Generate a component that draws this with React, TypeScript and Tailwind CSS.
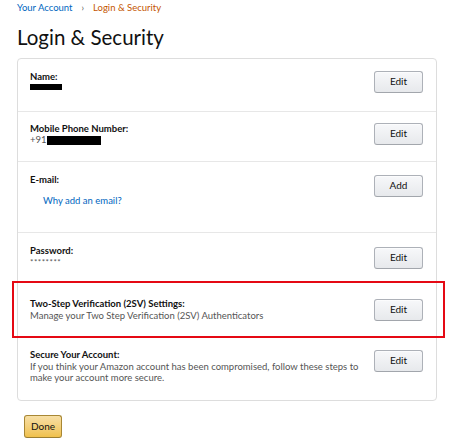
import type { ReactNode } from 'react'

const FONT = "font-['Lato','Open_Sans',sans-serif]"

function EditButton({ label = 'Edit' }: { label?: string }) {
  return (
    <button className="w-[49px] h-[22px] rounded-[3px] border border-[#adb1b8] border-b-[#a2a6ac] bg-gradient-to-b from-[#f7f8fa] to-[#e7e9ec] text-[10px] text-[#111] shadow-[0_1px_0_rgba(255,255,255,0.6)_inset]">
      {label}
    </button>
  )
}

function Row({
  height,
  padTop,
  btnTop,
  label,
  button = 'Edit',
  last,
  children,
}: {
  height: number
  padTop: number
  btnTop: number
  label: string
  button?: string
  last?: boolean
  children?: ReactNode
}) {
  return (
    <div
      className={`relative flex justify-between pl-[12px] pr-[13px] ${last ? '' : 'border-b border-[#e7e7e7]'}`}
      style={{ height }}
    >
      <div className="flex flex-col" style={{ paddingTop: padTop }}>
        <span className="text-[9.5px] leading-[12px] font-bold text-[#111]">{label}</span>
        {children}
      </div>
      <div style={{ paddingTop: btnTop }}>
        <EditButton label={button} />
      </div>
    </div>
  )
}

export default function App() {
  return (
    <div className={`${FONT} w-[474px] h-[441px] bg-white pl-[17px] pt-[1px]`}>
      {/* breadcrumb */}
      <div className="flex items-center text-[9.5px] leading-[14px]">
        <span className="text-[#0066c0]">Your Account</span>
        <span className="mx-[9px] text-[#555] text-[9px]">›</span>
        <span className="text-[#c45500]">Login &amp; Security</span>
      </div>

      <h1 className="mt-[9px] text-[20.5px] leading-[26px] text-[#111]">Login &amp; Security</h1>

      <div className="mt-[8px] w-[420px] rounded-[4px] border border-[#ddd]">
        <Row height={53} padTop={12} btnTop={8} label="Name:">
          <span className="mt-[1px] block w-[32px] h-[6px] bg-black" />
        </Row>

        <Row height={50} padTop={11} btnTop={7} label="Mobile Phone Number:">
          <span className="flex items-center text-[9.5px] leading-[10px] text-[#555]">
            +91<span className="inline-block w-[54px] h-[9px] bg-black" />
          </span>
        </Row>

        <Row height={71} padTop={12} btnTop={9} label="E-mail:" button="Add">
          <span className="mt-[9px] ml-[13px] text-[9.5px] leading-[12px] text-[#0066c0]">
            Why add an email?
          </span>
        </Row>

        <Row height={50} padTop={12} btnTop={10} label="Password:">
          <span className="text-[8px] leading-[10px] text-[#555] tracking-[0.5px]">********</span>
        </Row>

        <Row height={54} padTop={15} btnTop={12} label="Two-Step Verification (2SV) Settings:">
          <span className="text-[9.5px] leading-[11px] text-[#555]">
            Manage your Two Step Verification (2SV) Authenticators
          </span>
          {/* highlight annotation */}
          <div className="absolute left-[-6px] right-[-9px] top-[-2px] bottom-[-2px] border-2 border-[#e50914]" />
        </Row>

        <Row height={63} padTop={12} btnTop={9} label="Secure Your Account:" last>
          <span className="w-[330px] text-[9.5px] leading-[11px] text-[#555]">
            If you think your Amazon account has been compromised, follow these steps to make your account more secure.
          </span>
        </Row>
      </div>

      <button className="mt-[14px] ml-[7px] w-[38px] h-[23px] rounded-[3px] border border-[#a88734] border-b-[#9c7e31] bg-gradient-to-b from-[#f7dfa5] to-[#f0c14b] text-[10px] text-[#111]">
        Done
      </button>
    </div>
  )
}
